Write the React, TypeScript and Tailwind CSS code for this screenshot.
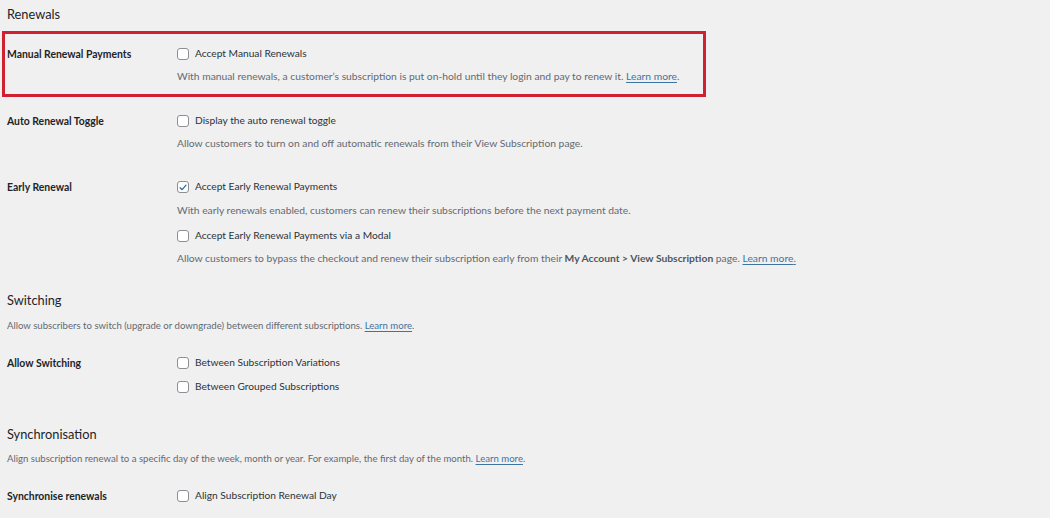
import React from "react";

const font = { fontFamily: 'Lato, "Noto Sans", Arial, sans-serif' };

function Checkbox({ checked = false }: { checked?: boolean }) {
  return (
    <span className="relative inline-flex h-[12px] w-[12px] shrink-0 items-center justify-center rounded-[3px] border border-[#8c8f94] bg-white">
      {checked && (
        <svg viewBox="0 0 12 12" className="h-[11px] w-[11px]" fill="none">
          <path d="M2.6 6.2 L5 8.6 L9.6 3.2" stroke="#2f6ea8" strokeWidth="1.6" strokeLinecap="round" strokeLinejoin="round" />
        </svg>
      )}
    </span>
  );
}

function CheckRow({ label, checked, className = "" }: { label: string; checked?: boolean; className?: string }) {
  return (
    <label className={`flex h-[18px] items-center gap-[6px] text-[10.2px] text-[#2c3338] ${className}`}>
      <Checkbox checked={checked} />
      <span>{label}</span>
    </label>
  );
}

function Desc({ children, className = "" }: { children: React.ReactNode; className?: string }) {
  return <p className={`whitespace-nowrap leading-[16px] text-[#646970] ${className}`}>{children}</p>;
}

function LearnMore({ dot = true }: { dot?: boolean }) {
  return (
    <>
      <a className="text-[#3f74a0] underline underline-offset-2">Learn more{dot ? "" : "."}</a>
      {dot ? "." : ""}
    </>
  );
}

function Row({ label, children, className = "" }: { label: string; children: React.ReactNode; className?: string }) {
  return (
    <div className={`flex ${className}`}>
      <div className="w-[170px] shrink-0 text-[10.4px] font-bold leading-[18px] text-[#1d2327]">{label}</div>
      <div className="flex flex-col">{children}</div>
    </div>
  );
}

function Heading({ children, className = "" }: { children: React.ReactNode; className?: string }) {
  return <h2 className={`text-[12.8px] leading-[20px] text-[#1d2327] ${className}`}>{children}</h2>;
}

export default function App() {
  return (
    <div className="min-h-[518px] w-[1050px] overflow-hidden bg-[#f0f0f1] px-[7px] pt-[4px]" style={font}>
      {/* Renewals */}
      <Heading>Renewals</Heading>

      <div className="-ml-[5px] mt-[7px] w-[704px] border-[3px] border-[#d1202f] px-[2px] pb-[10px] pt-[11px]">
        <Row label="Manual Renewal Payments">
          <CheckRow label="Accept Manual Renewals" />
          <Desc className="mt-[5px] text-[10.3px]">
            With manual renewals, a customer’s subscription is put on-hold until they login and pay to renew it. <LearnMore />
          </Desc>
        </Row>
      </div>

      <Row label="Auto Renewal Toggle" className="mt-[15px]">
        <CheckRow label="Display the auto renewal toggle" />
        <Desc className="mt-[5px] text-[10.3px]">Allow customers to turn on and off automatic renewals from their View Subscription page.</Desc>
      </Row>

      <Row label="Early Renewal" className="mt-[27px]">
        <CheckRow label="Accept Early Renewal Payments" checked />
        <Desc className="mt-[6px] text-[10.3px]">With early renewals enabled, customers can renew their subscriptions before the next payment date.</Desc>
        <CheckRow label="Accept Early Renewal Payments via a Modal" className="mt-[9px]" />
        <Desc className="mt-[5px] text-[10.3px]">
          Allow customers to bypass the checkout and renew their subscription early from their{" "}
          <strong className="font-bold text-[#50575e]">My Account &gt; View Subscription</strong> page. <LearnMore dot={false} />
        </Desc>
      </Row>

      {/* Switching */}
      <Heading className="mt-[24px]">Switching</Heading>
      <Desc className="mt-[8px] text-[9.6px]">
        Allow subscribers to switch (upgrade or downgrade) between different subscriptions. <LearnMore />
      </Desc>
      <Row label="Allow Switching" className="mt-[20px]">
        <CheckRow label="Between Subscription Variations" />
        <CheckRow label="Between Grouped Subscriptions" className="mt-[6px]" />
      </Row>

      {/* Synchronisation */}
      <Heading className="mt-[28px]">Synchronisation</Heading>
      <Desc className="mt-[7px] text-[9.6px]">
        Align subscription renewal to a specific day of the week, month or year. For example, the first day of the month. <LearnMore />
      </Desc>
      <Row label="Synchronise renewals" className="mt-[20px]">
        <CheckRow label="Align Subscription Renewal Day" />
      </Row>
    </div>
  );
}
